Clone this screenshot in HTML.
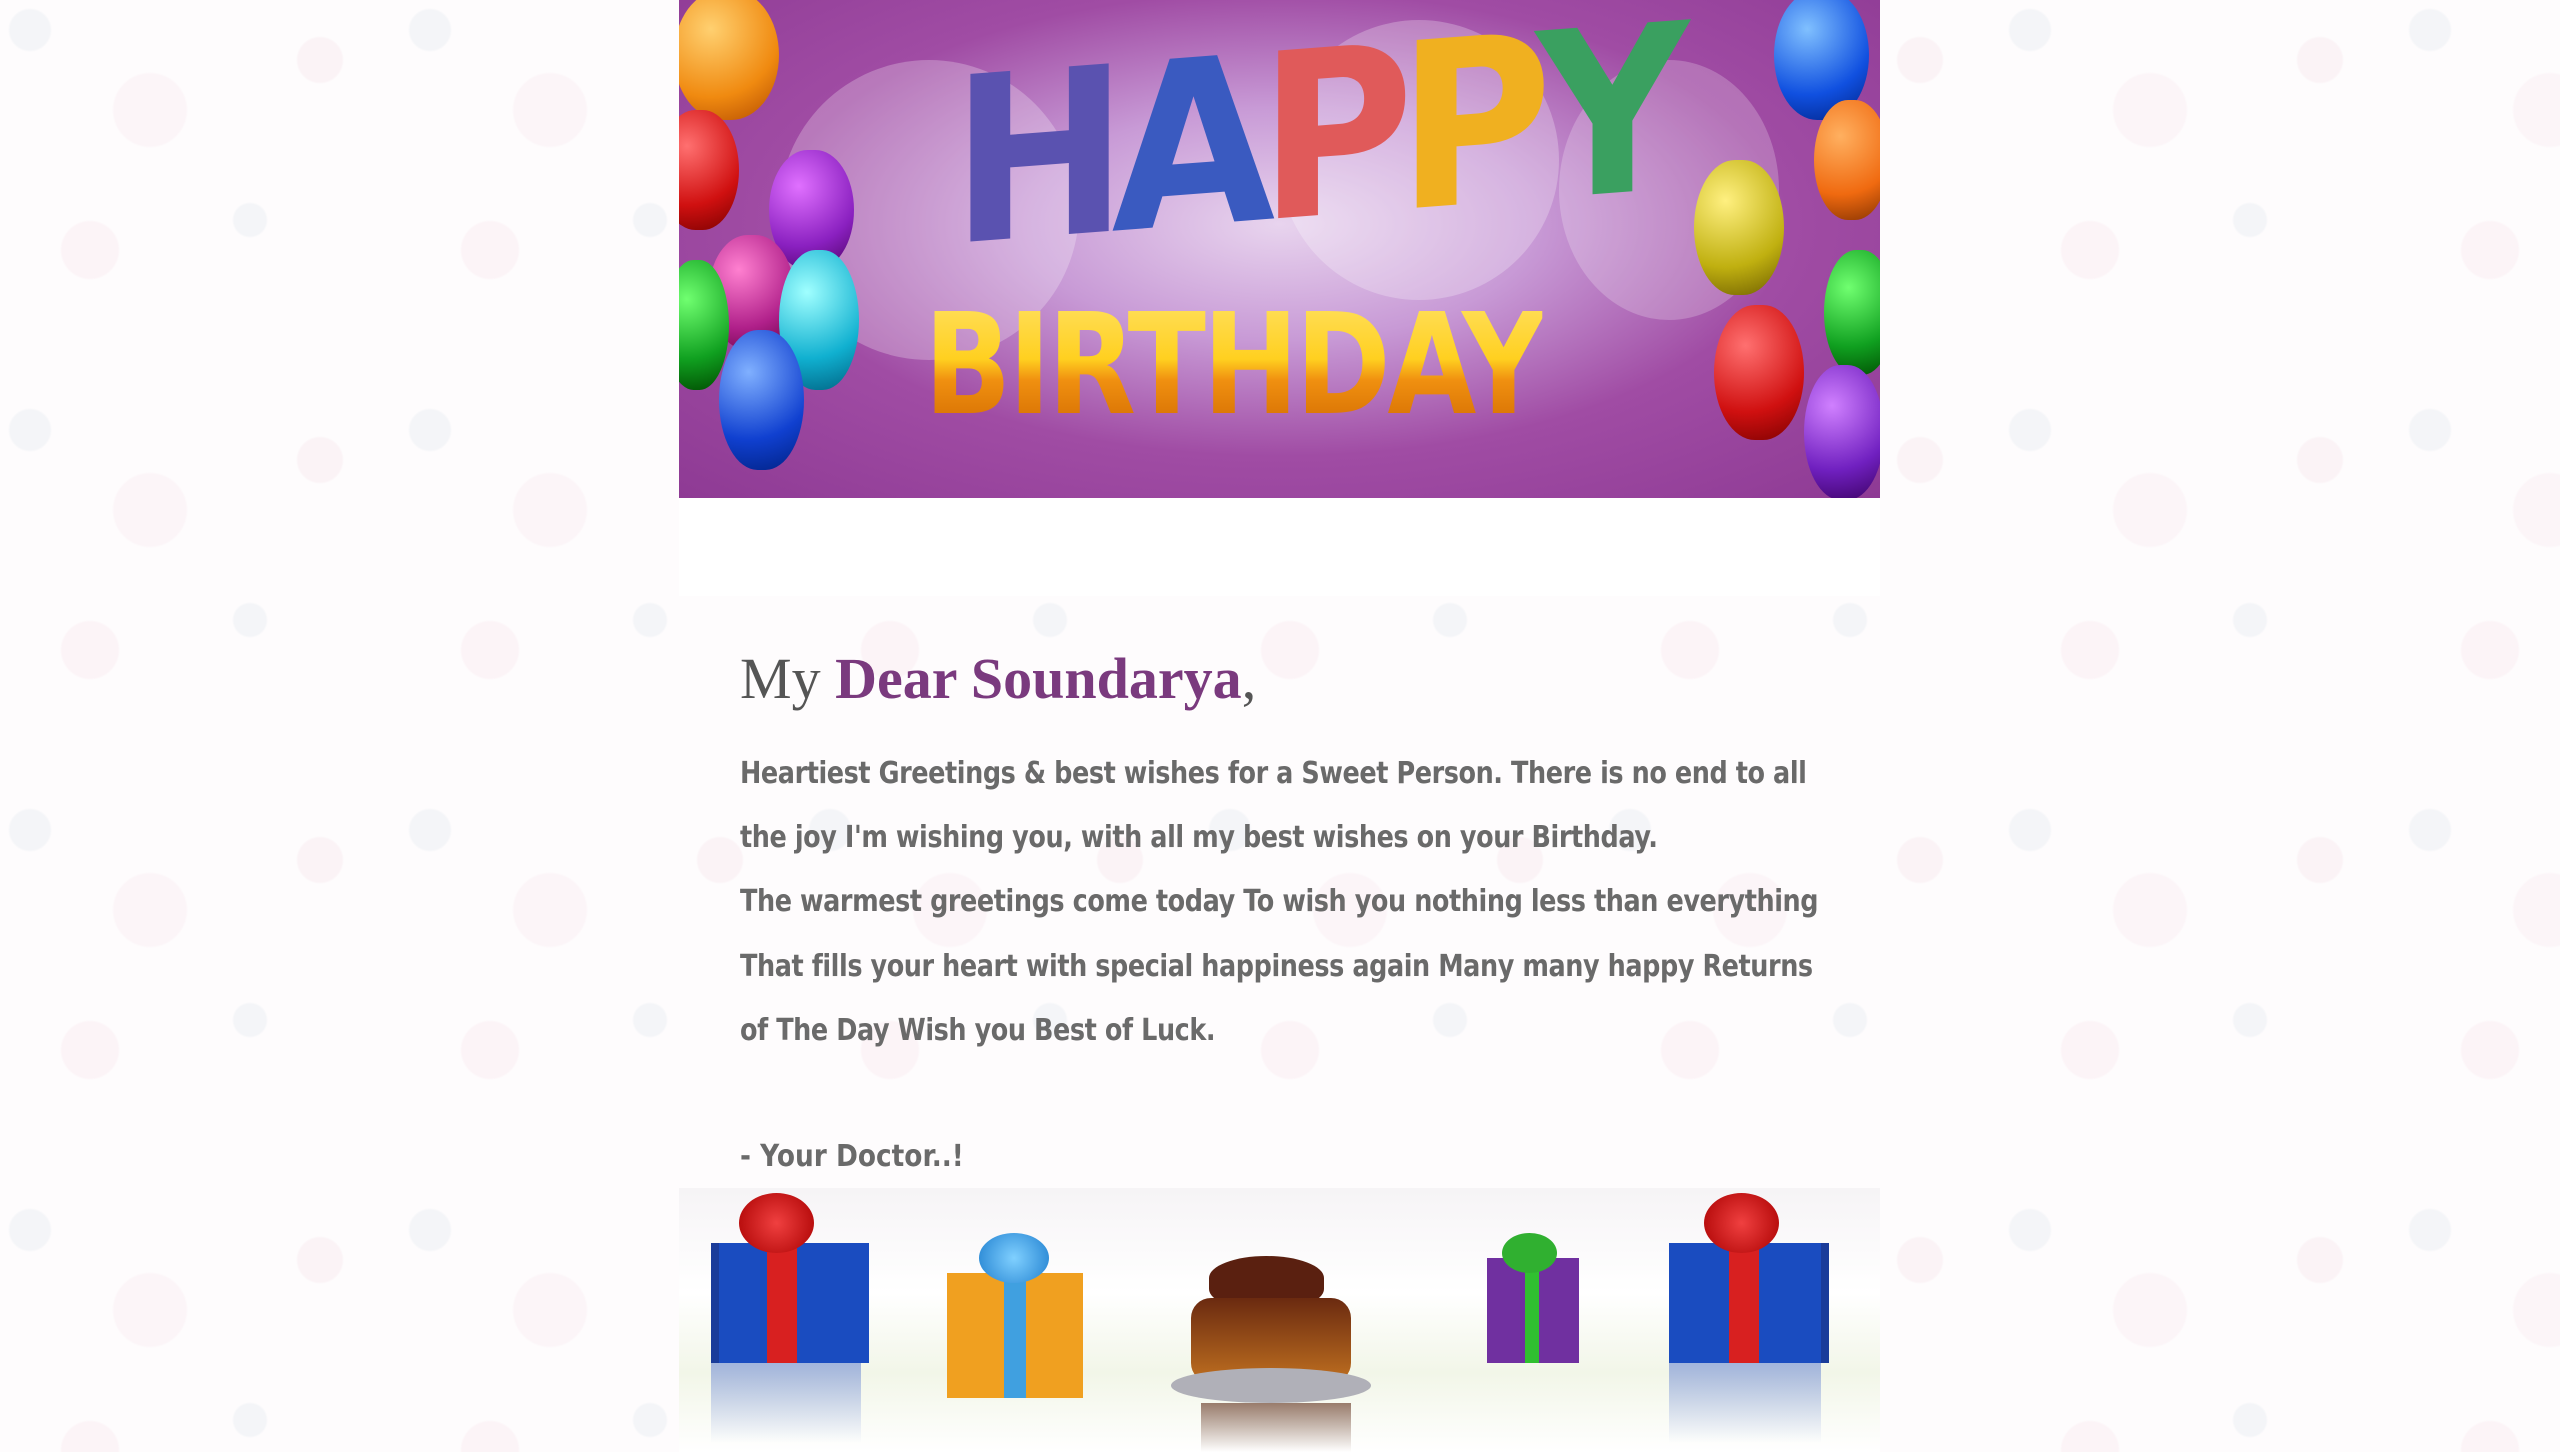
<!DOCTYPE html>
<html><head><meta charset="utf-8"><style>
html,body{margin:0;padding:0;width:2560px;height:1452px;overflow:hidden;background:#fff;}
body{position:relative;
background-color:#fefcfd;
background-image:
radial-gradient(circle at 30px 30px,#f4f5f8 0 20px,transparent 22px),
radial-gradient(circle at 150px 110px,#fcf5f8 0 36px,transparent 38px),
radial-gradient(circle at 250px 220px,#f4f5f8 0 16px,transparent 18px),
radial-gradient(circle at 90px 250px,#fcf4f7 0 28px,transparent 30px),
radial-gradient(circle at 320px 60px,#fbf3f6 0 22px,transparent 24px);
background-size:400px 400px;}
.card{position:absolute;left:679px;top:0;width:1201px;height:1452px;}
.banner{position:absolute;left:0;top:0;width:1201px;height:498px;overflow:hidden;
background:radial-gradient(ellipse at 50% 45%,#e8d4ee 0,#c89ad6 30%,#a04ca4 60%,#8e3a94 100%);}
.white{position:absolute;left:0;top:498px;width:1201px;height:98px;background:#fff;}
.b{position:absolute;border-radius:50%/55%;}
.txt{position:absolute;left:0;top:596px;width:1201px;height:590px;}
h1{position:absolute;left:61px;top:49px;margin:0;font:400 58px "Liberation Serif",serif;color:#555;white-space:nowrap;}
h1 b{color:#7a3a7e;font-weight:700;}
.body{position:absolute;left:61px;top:146px;font:700 30px "DejaVu Sans","Liberation Sans",sans-serif;color:#6a6a6a;line-height:64.2px;white-space:nowrap;transform:scaleX(0.85);transform-origin:0 0;letter-spacing:-0.5px}
.sig{position:absolute;left:61px;top:543px;font:700 30px "DejaVu Sans",sans-serif;color:#6a6a6a;transform:scaleX(0.88);transform-origin:0 0;white-space:nowrap}
.bottom{position:absolute;left:0;top:1188px;width:1201px;height:264px;background:linear-gradient(#f6f4f6,#fff 40%,#f2f6e8 70%,#fff);overflow:hidden}
</style></head><body>
<div class="card">
<div class="banner">
  <div style="position:absolute;left:100px;top:60px;width:300px;height:300px;border-radius:50%;background:rgba(255,255,255,0.25)"></div>
  <div style="position:absolute;left:600px;top:20px;width:280px;height:280px;border-radius:50%;background:rgba(255,255,255,0.25)"></div>
  <div style="position:absolute;left:880px;top:60px;width:220px;height:260px;border-radius:50%;background:rgba(255,255,255,0.22)"></div>
  <div class="b" style="left:-5px;top:-10px;width:105px;height:130px;background:radial-gradient(circle at 35% 30%,#ffd070,#f08a10 60%,#b04800)"></div>
  <div class="b" style="left:-20px;top:110px;width:80px;height:120px;background:radial-gradient(circle at 35% 30%,#ff7070,#d01010 60%,#700)"></div>
  <div class="b" style="left:90px;top:150px;width:85px;height:120px;background:radial-gradient(circle at 35% 30%,#e070ff,#8a20c0 60%,#4a0060)"></div>
  <div class="b" style="left:30px;top:235px;width:85px;height:115px;background:radial-gradient(circle at 35% 30%,#ff80d0,#b0208a 60%,#600040)"></div>
  <div class="b" style="left:-15px;top:260px;width:65px;height:130px;background:radial-gradient(circle at 35% 30%,#70ff70,#10a020 60%,#004a00)"></div>
  <div class="b" style="left:100px;top:250px;width:80px;height:140px;background:radial-gradient(circle at 35% 30%,#a0ffff,#10b0d0 60%,#006080)"></div>
  <div class="b" style="left:40px;top:330px;width:85px;height:140px;background:radial-gradient(circle at 35% 30%,#80b0ff,#1040d0 60%,#002080)"></div>
  <div class="b" style="left:1095px;top:-10px;width:95px;height:130px;background:radial-gradient(circle at 35% 30%,#80c0ff,#1050e0 60%,#002080)"></div>
  <div class="b" style="left:1135px;top:100px;width:75px;height:120px;background:radial-gradient(circle at 35% 30%,#ffb060,#f06a10 60%,#803000)"></div>
  <div class="b" style="left:1015px;top:160px;width:90px;height:135px;background:radial-gradient(circle at 35% 30%,#fff080,#c0b010 60%,#6a5a00)"></div>
  <div class="b" style="left:1145px;top:250px;width:70px;height:125px;background:radial-gradient(circle at 35% 30%,#70ff70,#10a020 60%,#004a00)"></div>
  <div class="b" style="left:1035px;top:305px;width:90px;height:135px;background:radial-gradient(circle at 35% 30%,#ff7070,#d01010 60%,#700)"></div>
  <div class="b" style="left:1125px;top:365px;width:80px;height:135px;background:radial-gradient(circle at 35% 30%,#d080ff,#7020c0 60%,#3a0060)"></div>
  <div style="position:absolute;left:272px;top:50px;font:900 230px/1 'DejaVu Sans','Liberation Sans',sans-serif;letter-spacing:-18px;white-space:nowrap;transform:scaleX(0.92) skewY(-4deg);transform-origin:0 0">
    <span style="color:#5a52b0">H</span><span style="color:#3a5ac0">A</span><span style="color:#e05a5a">P</span><span style="color:#f0b020">P</span><span style="color:#3aa060">Y</span>
  </div>
  <div style="position:absolute;left:245px;top:296px;font:900 140px/1 'DejaVu Sans','Liberation Sans',sans-serif;letter-spacing:-4px;white-space:nowrap;background:linear-gradient(#ffe060,#ffd020 45%,#f09010 60%,#d06800);-webkit-background-clip:text;color:transparent;transform:scaleX(0.82);transform-origin:0 0">BIRTHDAY</div>
</div>
<div class="white"></div>
<div class="txt">
  <h1>My <b>Dear Soundarya</b>,</h1>
  <div class="body">Heartiest Greetings &amp; best wishes for a Sweet Person. There is no end to all<br>the joy I'm wishing you, with all my best wishes on your Birthday.<br>The warmest greetings come today To wish you nothing less than everything<br>That fills your heart with special happiness again Many many happy Returns<br>of The Day Wish you Best of Luck.</div>
  <div class="sig">- Your Doctor..!</div>
</div>
<div class="bottom">
  <div style="position:absolute;left:32px;top:55px;width:150px;height:120px;background:#1a4cc0;border-left:8px solid #1a3c9a"></div>
  <div style="position:absolute;left:88px;top:55px;width:30px;height:120px;background:#d82020"></div>
  <div style="position:absolute;left:60px;top:5px;width:75px;height:60px;border-radius:50%;background:radial-gradient(circle,#f04040,#a00)"></div>
  <div style="position:absolute;left:32px;top:175px;width:150px;height:80px;background:linear-gradient(rgba(40,80,200,.4),transparent)"></div>
  <div style="position:absolute;left:268px;top:85px;width:136px;height:125px;background:#f0a020"></div>
  <div style="position:absolute;left:325px;top:85px;width:22px;height:125px;background:#40a0e0"></div>
  <div style="position:absolute;left:300px;top:45px;width:70px;height:50px;border-radius:50%;background:radial-gradient(circle,#80d0ff,#2080d0)"></div>
  <div style="position:absolute;left:530px;top:68px;width:115px;height:55px;border-radius:50%/40%;background:#5a2010"></div>
  <div style="position:absolute;left:512px;top:110px;width:160px;height:85px;border-radius:20px;background:linear-gradient(#6a2a10,#c07020)"></div>
  <div style="position:absolute;left:492px;top:180px;width:200px;height:35px;border-radius:50%;background:#b0b0b8"></div>
  <div style="position:absolute;left:522px;top:215px;width:150px;height:49px;background:linear-gradient(rgba(90,40,20,.6),transparent)"></div>
  <div style="position:absolute;left:808px;top:70px;width:92px;height:105px;background:#7030a0"></div>
  <div style="position:absolute;left:846px;top:70px;width:14px;height:105px;background:#30c030"></div>
  <div style="position:absolute;left:823px;top:45px;width:55px;height:40px;border-radius:50%;background:#30b030"></div>
  <div style="position:absolute;left:990px;top:55px;width:152px;height:120px;background:#1a4cc0;border-right:8px solid #1a3c9a"></div>
  <div style="position:absolute;left:1050px;top:55px;width:30px;height:120px;background:#d82020"></div>
  <div style="position:absolute;left:1025px;top:5px;width:75px;height:60px;border-radius:50%;background:radial-gradient(circle,#f04040,#a00)"></div>
  <div style="position:absolute;left:990px;top:175px;width:152px;height:80px;background:linear-gradient(rgba(40,80,200,.4),transparent)"></div>
</div>
</div>
</body></html>
